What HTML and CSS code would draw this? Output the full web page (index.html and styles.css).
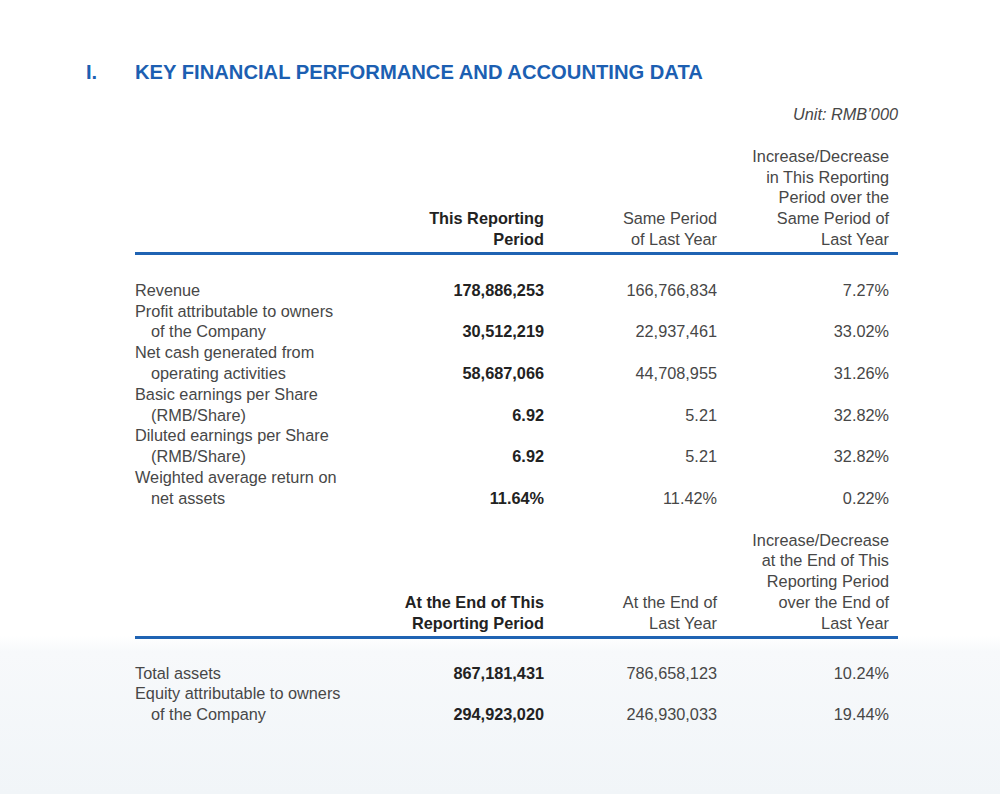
FILE: index.html
```html
<!DOCTYPE html>
<html lang="en">
<head>
<meta charset="utf-8">
<title>Key Financial Performance and Accounting Data</title>
<link rel="stylesheet" href="styles.css">
</head>
<body>
<main class="page">
  <h1 class="title"><span class="title-num">I.</span><span class="title-text">KEY FINANCIAL PERFORMANCE AND ACCOUNTING DATA</span></h1>
  <div class="unit">Unit: RMB’000</div>

  <section class="fin-table">
    <div class="row head">
      <div class="label"></div>
      <div class="cell strong">This Reporting<br>Period</div>
      <div class="cell">Same Period<br>of Last Year</div>
      <div class="cell">Increase/Decrease<br>in This Reporting<br>Period over the<br>Same Period of<br>Last Year</div>
    </div>
    <div class="rule"></div>
    <div class="body">
      <div class="row">
        <div class="label">Revenue</div>
        <div class="cell strong">178,886,253</div>
        <div class="cell">166,766,834</div>
        <div class="cell">7.27%</div>
      </div>
      <div class="row">
        <div class="label">Profit attributable to owners<br>of the Company</div>
        <div class="cell strong">30,512,219</div>
        <div class="cell">22,937,461</div>
        <div class="cell">33.02%</div>
      </div>
      <div class="row">
        <div class="label">Net cash generated from<br>operating activities</div>
        <div class="cell strong">58,687,066</div>
        <div class="cell">44,708,955</div>
        <div class="cell">31.26%</div>
      </div>
      <div class="row">
        <div class="label">Basic earnings per Share<br>(RMB/Share)</div>
        <div class="cell strong">6.92</div>
        <div class="cell">5.21</div>
        <div class="cell">32.82%</div>
      </div>
      <div class="row">
        <div class="label">Diluted earnings per Share<br>(RMB/Share)</div>
        <div class="cell strong">6.92</div>
        <div class="cell">5.21</div>
        <div class="cell">32.82%</div>
      </div>
      <div class="row">
        <div class="label">Weighted average return on<br>net assets</div>
        <div class="cell strong">11.64%</div>
        <div class="cell">11.42%</div>
        <div class="cell">0.22%</div>
      </div>
    </div>
  </section>

  <section class="fin-table second">
    <div class="row head">
      <div class="label"></div>
      <div class="cell strong">At the End of This<br>Reporting Period</div>
      <div class="cell">At the End of<br>Last Year</div>
      <div class="cell">Increase/Decrease<br>at the End of This<br>Reporting Period<br>over the End of<br>Last Year</div>
    </div>
    <div class="rule"></div>
    <div class="body">
      <div class="row">
        <div class="label">Total assets</div>
        <div class="cell strong">867,181,431</div>
        <div class="cell">786,658,123</div>
        <div class="cell">10.24%</div>
      </div>
      <div class="row">
        <div class="label">Equity attributable to owners<br>of the Company</div>
        <div class="cell strong">294,923,020</div>
        <div class="cell">246,930,033</div>
        <div class="cell">19.44%</div>
      </div>
    </div>
  </section>
</main>
</body>
</html>
```

FILE: styles.css
```css
html, body {
  margin: 0;
  padding: 0;
}

body {
  width: 1000px;
  min-height: 794px;
  background: linear-gradient(to bottom, #ffffff 0, #ffffff 636px, #f7f9fb 652px, #f1f5f8 794px);
  font-family: "Liberation Sans", Arial, sans-serif;
  color: #474747;
}

.page {
  padding: 60px 102px 0 86px;
}

.title {
  display: flex;
  margin: 0;
  font-size: 20.2px;
  line-height: 24px;
  font-weight: bold;
  color: #1c5fb2;
}

.title-num {
  width: 49px;
}

.unit {
  margin-top: 20px;
  font-size: 16.3px;
  line-height: 20.8px;
  font-style: italic;
  text-align: right;
}

.fin-table {
  margin-top: 21px;
  margin-left: 49px;
  font-size: 16.3px;
  line-height: 20.8px;
}

.fin-table.second {
  margin-top: 21px;
}

.row {
  display: grid;
  grid-template-columns: 236px 173px 173px 172px;
  align-items: end;
  padding-right: 9px;
}

.cell {
  text-align: right;
}

.strong {
  font-weight: bold;
  color: #222222;
}

.label {
  padding-left: 16px;
  text-indent: -16px;
}

.rule {
  height: 3px;
  margin-top: 2px;
  background: #1f63b3;
}

.body {
  padding-top: 25px;
}

.second .body {
  padding-top: 24px;
}
```
